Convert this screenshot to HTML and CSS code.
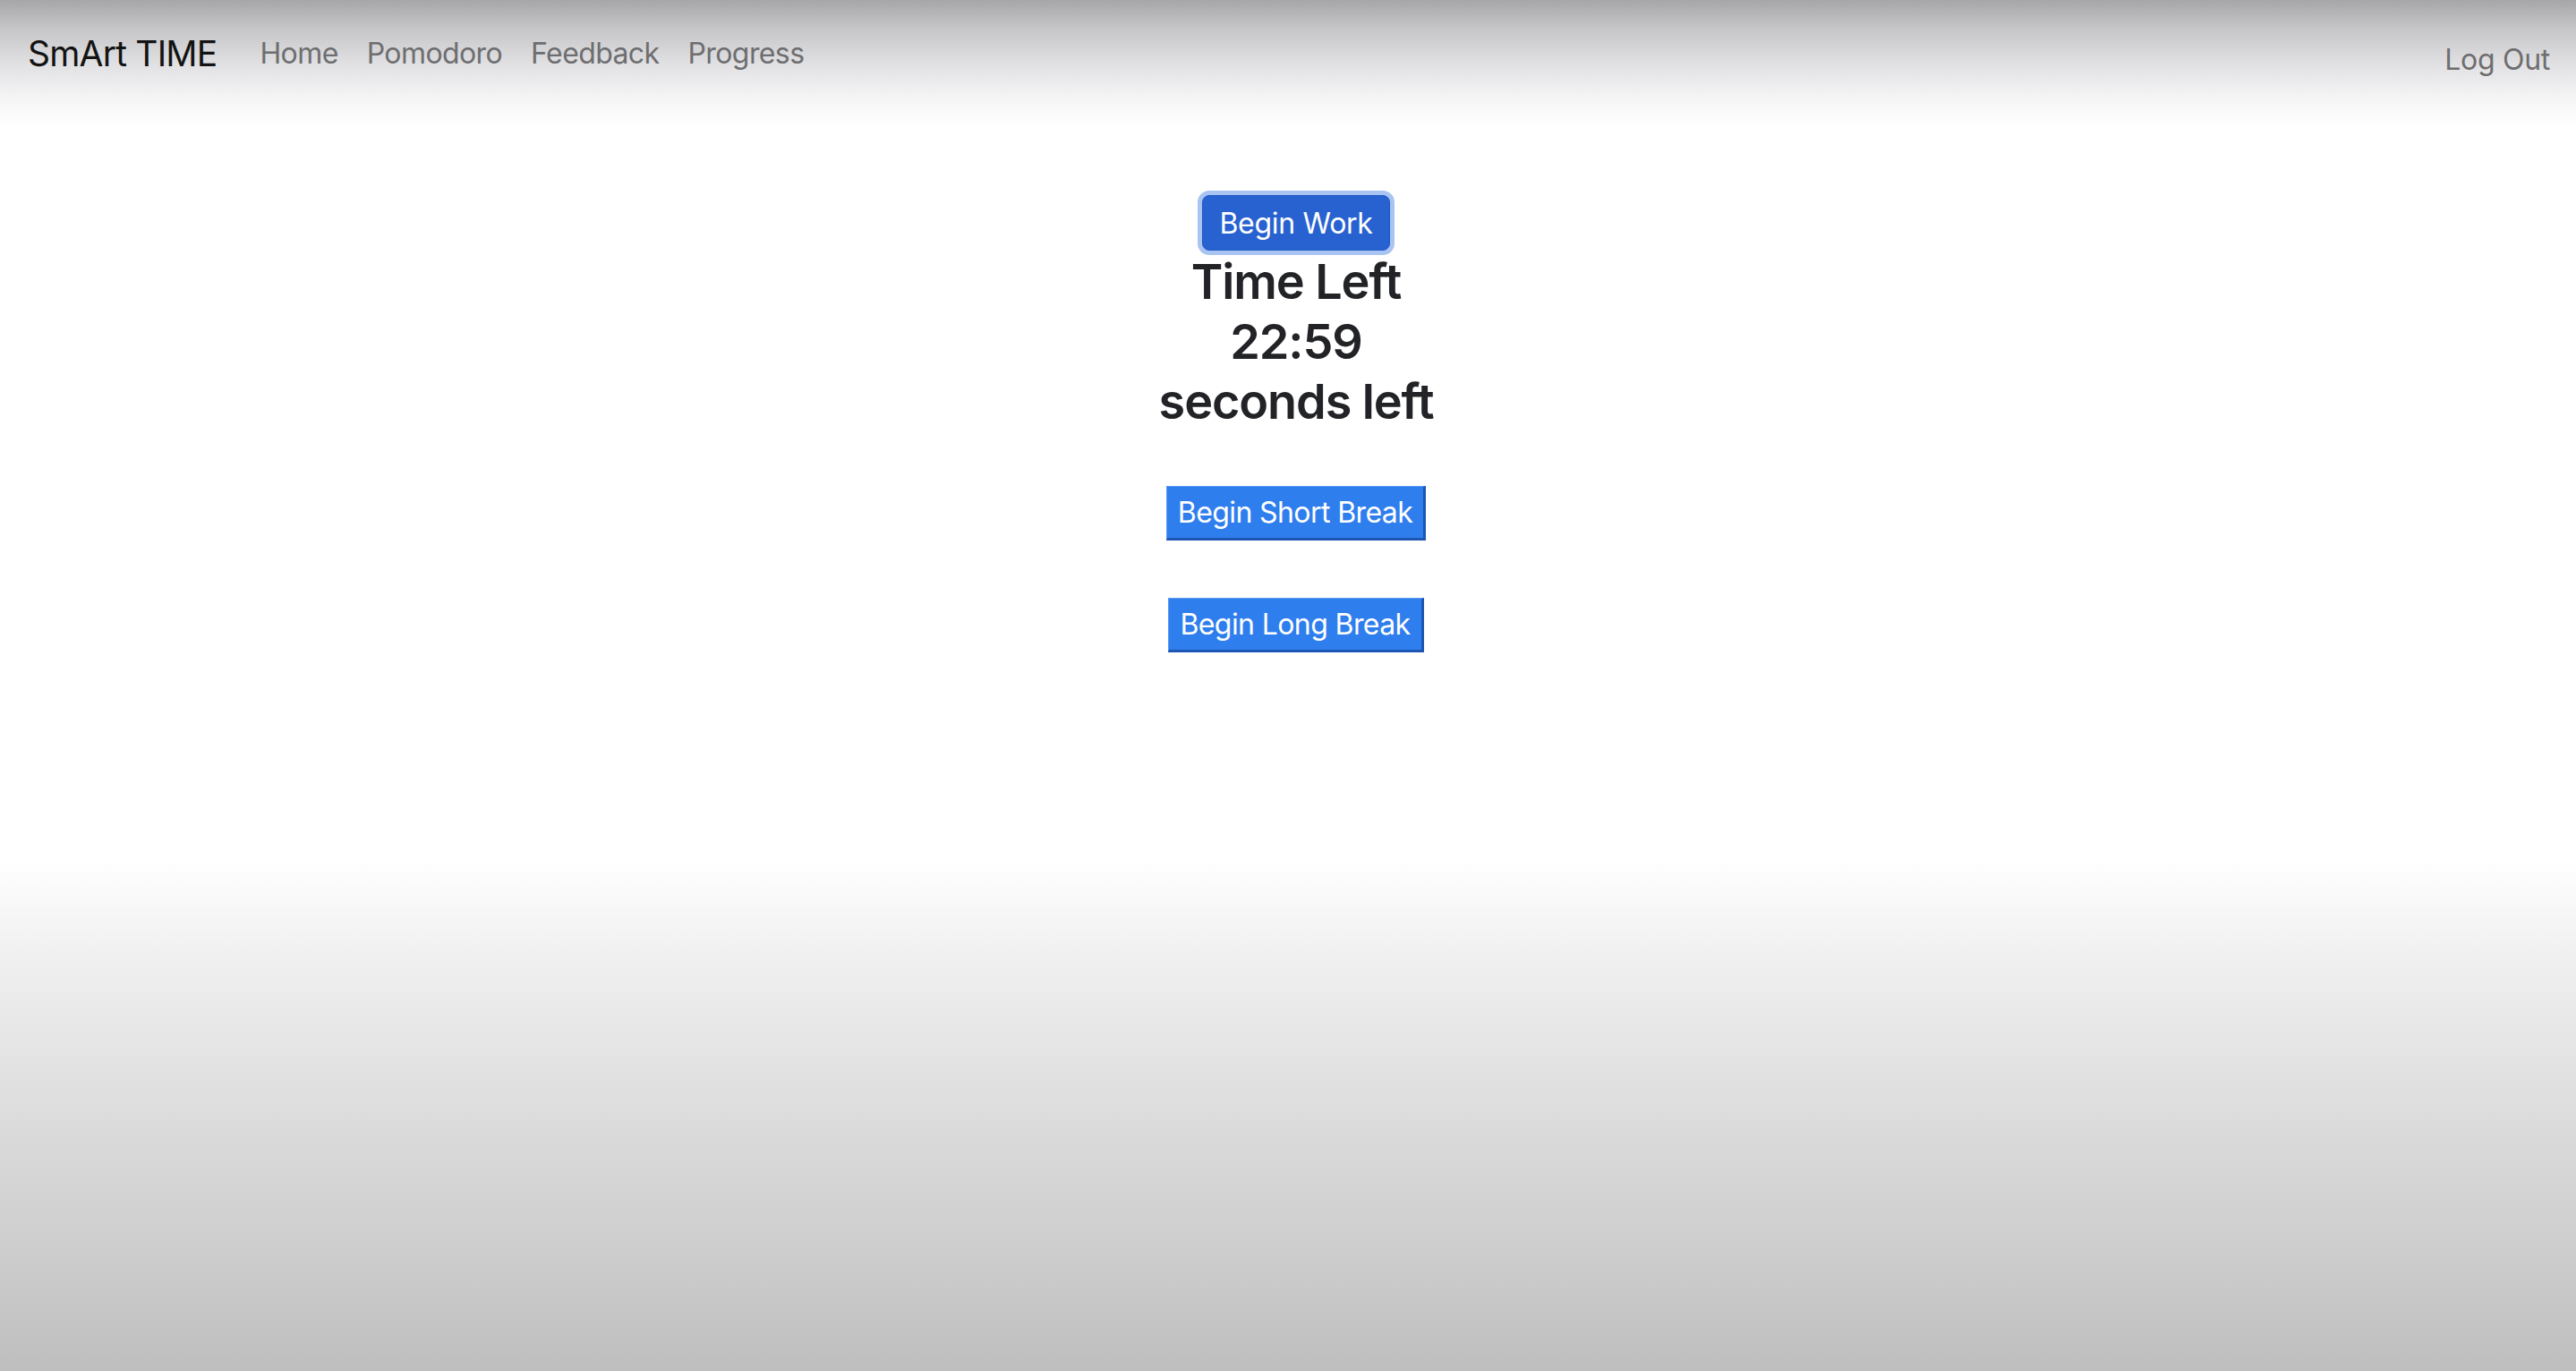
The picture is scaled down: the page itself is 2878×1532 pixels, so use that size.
FILE: index.html
```html
<!DOCTYPE html>
<html lang="en">
<head>
<meta charset="utf-8">
<title>SmArt TIME</title>
<link rel="stylesheet" href="styles.css">
</head>
<body>
<nav class="navbar">
  <a class="brand" href="#">SmArt TIME</a>
  <ul class="nav-links">
    <li><a class="nav-link" href="#">Home</a></li>
    <li><a class="nav-link" href="#">Pomodoro</a></li>
    <li><a class="nav-link" href="#">Feedback</a></li>
    <li><a class="nav-link" href="#">Progress</a></li>
  </ul>
  <a class="nav-link logout" href="#">Log Out</a>
</nav>
<main class="timer">
  <button class="btn-work" type="button">Begin Work</button>
  <h3 class="timer-line">Time Left</h3>
  <h3 class="timer-line">22:59</h3>
  <h3 class="timer-line">seconds left</h3>
  <div class="break-buttons">
    <button class="btn-break" type="button">Begin Short Break</button>
    <button class="btn-break" type="button">Begin Long Break</button>
  </div>
</main>
</body>
</html>
```
FILE: styles.css
```css
html, body {
  margin: 0;
  padding: 0;
}
body {
  height: 1532px;
  overflow: hidden;
  font-family: "Inter", "Noto Sans", sans-serif;
  color: #212529;
  background: linear-gradient(to bottom,
    #a6a6a8 0px,
    #c4c4c6 30px,
    #e0e0e2 70px,
    #f5f5f6 110px,
    #ffffff 140px,
    #ffffff 960px,
    #f1f1f1 1060px,
    #dcdcdc 1250px,
    #cdcdcd 1400px,
    #bebebe 1532px);
}
.navbar {
  display: flex;
  align-items: center;
  height: 118px;
  padding: 0 29px 0 31px;
  box-sizing: border-box;
}
.brand {
  font-size: 39px;
  color: #131313;
  text-decoration: none;
  margin-right: 32px;
  letter-spacing: -0.8px;
}
.nav-links {
  display: flex;
  list-style: none;
  margin: 0;
  padding: 0;
}
.nav-link {
  display: block;
  font-size: 32px;
  color: #6e6e70;
  text-decoration: none;
  padding: 0 16px;
  letter-spacing: -0.6px;
}
.logout {
  margin-left: auto;
  padding: 0;
  margin-top: 14px;
  letter-spacing: -0.3px;
}
.timer {
  display: flex;
  flex-direction: column;
  align-items: center;
  padding-top: 100px;
  padding-left: 18px;
}
.btn-work {
  font-family: inherit;
  font-size: 32px;
  color: #ffffff;
  background: #2762d0;
  border: 1px solid #1f58c4;
  border-radius: 8px;
  height: 62px;
  padding: 0 18px;
  box-shadow: 0 0 0 5px #a9c4f2;
  letter-spacing: -0.3px;
}
.timer-line {
  margin: 0;
  font-size: 54px;
  font-weight: 600;
  line-height: 67px;
  color: #222326;
  letter-spacing: -1.1px;
}
.timer-line:first-of-type {
  margin-top: 1px;
}
.break-buttons {
  display: flex;
  flex-direction: column;
  align-items: center;
  gap: 64px;
  margin-top: 61px;
}
.btn-break {
  font-family: inherit;
  font-size: 32px;
  color: #ffffff;
  background: #2f7eee;
  height: 61px;
  padding: 0 12px;
  border-style: solid;
  border-width: 1px 3px 3px 1px;
  border-color: #5b9af2 #1d56b3 #1d56b3 #5b9af2;
  border-radius: 0;
  letter-spacing: -0.6px;
}
```
